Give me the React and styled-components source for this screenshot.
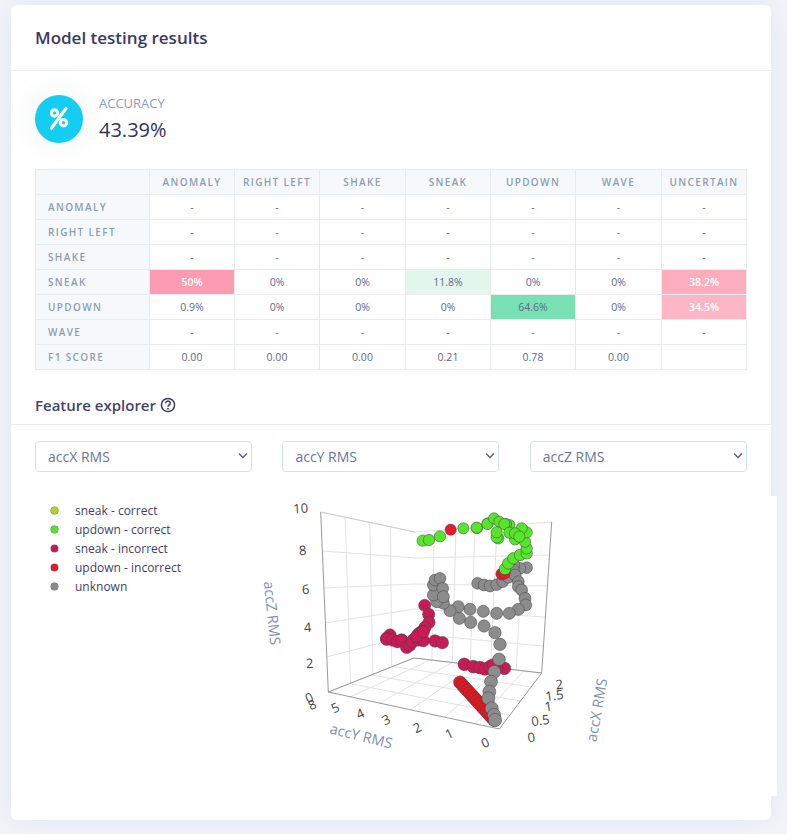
import React from 'react';
import styled, { createGlobalStyle } from 'styled-components';

const GlobalStyle = createGlobalStyle`
  body {
    margin: 0;
    background: #f3f4fa;
    font-family: "Open Sans", "Liberation Sans", sans-serif;
  }
`;

const Page = styled.div`
  width: 787px;
  height: 834px;
  padding: 5px 16px 14px 11px;
  box-sizing: border-box;
  overflow: hidden;
`;

const Card = styled.div`
  background: #fff;
  border-radius: 6px;
  height: 815px;
  box-shadow: 0 0 32px rgba(136, 152, 170, 0.15);
`;

const CardHeader = styled.div`
  height: 65px;
  padding: 0 24px;
  display: flex;
  align-items: center;
  border-bottom: 1px solid #e9ecef;
`;

const Title = styled.h3`
  margin: 0;
  font-size: 17px;
  font-weight: 600;
  color: #3a3a63;
`;

const Section = styled.div`
  padding: 24px 24px 0;
`;

const Stat = styled.div`
  display: flex;
  align-items: center;
  gap: 16px;
  height: 48px;
`;

const IconCircle = styled.div`
  width: 48px;
  height: 48px;
  border-radius: 50%;
  background: #13cdf3;
  box-shadow: 0 0 32px rgba(136, 152, 170, 0.15);
  flex: none;
`;

const StatLabel = styled.div`
  font-size: 13px;
  font-weight: 500;
  line-height: 17px;
  color: #8f9db0;
  text-transform: uppercase;
`;

const StatValue = styled.div`
  font-size: 20px;
  font-weight: 500;
  line-height: 27px;
  margin-top: 4px;
  color: #32325d;
`;

const Matrix = styled.table`
  margin-top: 26px;
  width: 711px;
  border-collapse: collapse;
  table-layout: fixed;
  font-size: 10.5px;
`;

const HeadCell = styled.th`
  height: 24px;
  padding: 0;
  border: 1px solid #e9ecef;
  background: #f6f9fc;
  color: #8f9db0;
  font-size: 10px;
  font-weight: 600;
  letter-spacing: 1.35px;
  text-transform: uppercase;
  text-align: ${(p) => (p.$row ? 'left' : 'center')};
  padding-left: ${(p) => (p.$row ? '12px' : '0')};
`;

const Cell = styled.td`
  height: 24px;
  padding: 0;
  border: 1px solid #e9ecef;
  text-align: center;
  font-weight: ${(p) => (p.$light ? 600 : p.$bg ? 500 : 400)};
  color: ${(p) => (p.$light ? '#fff' : '#5f6a88')};
  background: ${(p) => p.$bg || '#fff'};
`;

const SectionHeader = styled.div`
  margin-top: 24px;
  height: 30px;
  padding: 0 24px;
  display: flex;
  align-items: flex-start;
  gap: 4px;
  border-bottom: 1px solid #e9ecef;
`;

const SectionTitle = styled.h4`
  margin: 0;
  font-size: 15px;
  line-height: 22px;
  font-weight: 600;
  color: #45456b;
`;

const Selects = styled.div`
  display: grid;
  grid-template-columns: repeat(3, 217px);
  column-gap: 30.4px;
  padding: 16px 24px 0;
`;

const SelectBox = styled.div`
  position: relative;
  height: 31px;
`;

const Select = styled.select`
  appearance: none;
  width: 100%;
  height: 31px;
  padding: 0 12px;
  font-family: inherit;
  font-size: 14px;
  color: #6a7597;
  background: #fff;
  border: 1px solid #cfe4f1;
  border-radius: 4px;
`;

const Chevron = styled.svg`
  position: absolute;
  right: 4px;
  top: 11px;
  pointer-events: none;
`;

const Explorer = styled.div`
  display: flex;
  margin: 24px -6px 0 24px;
  height: 300px;
`;

const Legend = styled.ul`
  list-style: none;
  margin: 0;
  padding: 5px 0 0 16px;
  width: 200px;
  flex: none;
  box-sizing: content-box;
`;

const LegendItem = styled.li`
  display: flex;
  align-items: center;
  gap: 17px;
  height: 19px;
  font-size: 12px;
  color: #3f3f68;
`;

const Dot = styled.span`
  width: 7px;
  height: 7px;
  border-radius: 50%;
  background: ${(p) => p.$color};
  box-shadow: 0 0 0 0.5px #777;
`;

const Plot = styled.div`
  flex: 1;
  background: #fff;
`;

const TICK = { fontFamily: '"Open Sans", sans-serif', fontSize: 13, fill: '#444' };
const AXIS = { fontFamily: '"Open Sans", sans-serif', fontSize: 14.5, fill: '#8093ac' };

const columns = ['anomaly', 'right left', 'shake', 'sneak', 'updown', 'wave', 'uncertain'];
const dashes = ['-', '-', '-', '-', '-', '-', '-'];
const rows = [
  { name: 'anomaly', cells: dashes },
  { name: 'right left', cells: dashes },
  { name: 'shake', cells: dashes },
  {
    name: 'sneak',
    cells: [
      { v: '50%', bg: '#fb9cb2', light: true }, '0%', '0%',
      { v: '11.8%', bg: '#e4f7ef' }, '0%', '0%',
      { v: '38.2%', bg: '#fcaebf', light: true },
    ],
  },
  {
    name: 'updown',
    cells: [
      '0.9%', '0%', '0%', '0%',
      { v: '64.6%', bg: '#78e0b2' }, '0%',
      { v: '34.5%', bg: '#fcb6c6', light: true },
    ],
  },
  { name: 'wave', cells: dashes },
  { name: 'f1 score', cells: ['0.00', '0.00', '0.00', '0.21', '0.78', '0.00', ''] },
];
const colWidths = [114, 85, 85, 86, 85, 85, 86, 85];

const legend = [
  ['sneak - correct', '#b4d419'],
  ['updown - correct', '#55e62b'],
  ['sneak - incorrect', '#c91a56'],
  ['updown - incorrect', '#e8192c'],
  ['unknown', '#8c8c8c'],
];

// zoomed crop coordinates -> page coordinates
const top = (list) => list.map(([x, y]) => [260 + x / 3, 490 + y / 3]);
const low = (list) => list.map(([x, y]) => [260 + x / 3, 630 + y / 3]);
const cluster = (list) => list.map(([x, y]) => [470 + x / 3, 500 + y / 3]);

const streak = Array.from({ length: 15 }, (_, i) => [600 + i * 7.3, 157 + i * 8]);

const series = [
  {
    color: '#c91a56',
    points: [
      ...top([[494, 346], [506, 373], [507, 397], [495, 412], [485, 425], [475, 432], [390, 435], [380, 445], [425, 450], [460, 450]]),
      ...low([[380, 28], [398, 30], [412, 35], [425, 32], [440, 52], [450, 45], [457, 35], [475, 30], [490, 32], [525, 33], [547, 38], [470, 20], [490, 5],
        [613, 103], [640, 110], [660, 113], [675, 117], [733, 115], [710, 113], [690, 110], [700, 105]]),
    ],
  },
  { color: '#e6161f', points: low(streak) },
  {
    color: '#8c8c8c',
    points: [
      ...top([[653, 280], [672, 285], [690, 288], [710, 284], [728, 275], [745, 262], [800, 233], [780, 235], [762, 225],
        [760, 240], [765, 255], [775, 275], [775, 290], [785, 300], [795, 325], [797, 345], [775, 358], [748, 370],
        [710, 370], [670, 364], [630, 358], [595, 350], [570, 362], [550, 340], [530, 335], [520, 315], [520, 285],
        [525, 270], [540, 265], [548, 295], [550, 320], [598, 385], [632, 397], [672, 408], [705, 428]]),
      ...low([[720, 43], [717, 88], [703, 125], [693, 155], [688, 185], [685, 205], [695, 235], [702, 255], [705, 270]]),
    ],
  },
  { color: '#e8192c', points: top([[725, 252], [733, 250]]) },
  {
    color: '#55e62b',
    points: [
      ...top([[488, 152], [507, 150], [540, 139], [610, 115], [651, 114], [683, 100]]),
      ...cluster([[20, 83], [52, 72], [72, 55], [105, 207], [115, 190], [130, 175], [150, 165], [170, 160], [170, 145], [165, 125],
        [170, 97], [155, 85], [118, 75], [108, 72], [88, 65], [103, 72], [85, 115], [80, 112], [135, 118], [118, 98], [80, 97], [135, 100], [148, 110]]),
    ],
  },
  { color: '#e8192c', points: top([[572, 119]]) },
];

// points nearer the camera sit lower on the picture and are drawn bigger
const radius = (y) => 5.5 + ((y - 510) / 220) * 1.2;

const mix = (a, b, t) => [a[0] + (b[0] - a[0]) * t, a[1] + (b[1] - a[1]) * t];

const leftZ = [[320.7, 512], [323, 551], [323.7, 588], [325, 623], [326.7, 657], [328.3, 692]];
const backZ = [[415, 532], [415, 558], [415, 584], [414.6, 609], [414.3, 634], [414, 658]];
const rightZ = [[551.7, 522], [550, 555], [548, 586], [545, 617], [543, 646], [541.7, 673]];
const front = [499.3, 729];

const Line = ({ a, b, color = '#e3e3e3' }) => (
  <line x1={a[0]} y1={a[1]} x2={b[0]} y2={b[1]} stroke={color} strokeWidth="1" />
);

const Chart = () => {
  const lines = [];
  // z grid on both walls
  leftZ.forEach((p, i) => lines.push([p, backZ[i]], [backZ[i], rightZ[i]]));
  // upright grid lines on the walls
  [0.26, 0.52, 0.74].forEach((t) => {
    lines.push([mix(leftZ[0], backZ[0], t), mix(leftZ[5], backZ[5], t)]);
  });
  [0.14, 0.3, 0.44, 0.6, 0.8].forEach((t) => {
    lines.push([mix(backZ[0], rightZ[0], t), mix(backZ[5], rightZ[5], t)]);
  });
  // floor grid
  [0.13, 0.3, 0.48, 0.68, 0.86].forEach((t) => {
    lines.push([mix(leftZ[5], front, t), mix(backZ[5], rightZ[5], t)]);
  });
  [0.25, 0.5, 0.75].forEach((t) => {
    lines.push([mix(leftZ[5], backZ[5], t), mix(front, rightZ[5], t)]);
  });

  return (
    <svg width="526" height="300" viewBox="251 496 526 300">
      {lines.map(([a, b], i) => <Line key={i} a={a} b={b} />)}
      <Line a={leftZ[0]} b={leftZ[5]} color="#9a9a9a" />
      <Line a={rightZ[0]} b={rightZ[5]} color="#9a9a9a" />
      <Line a={backZ[0]} b={leftZ[0]} color="#cfcfcf" />
      <Line a={leftZ[5]} b={front} color="#9a9a9a" />
      <Line a={front} b={rightZ[5]} color="#9a9a9a" />
      <Line a={leftZ[5]} b={backZ[5]} color="#9a9a9a" />
      <Line a={backZ[5]} b={rightZ[5]} color="#9a9a9a" />

      {series.map((s, i) => s.points.map(([x, y], j) => (
        <circle key={`${i}-${j}`} cx={x} cy={y} r={radius(y)} fill={s.color} stroke="#444" strokeOpacity="0.65" strokeWidth="0.8" />
      )))}

      {[['10', 301, 513], ['8', 303, 555], ['6', 306, 594], ['4', 308, 632], ['2', 310, 668]].map(([t, x, y]) => (
        <text key={t} x={x} y={y} textAnchor="middle" transform={`rotate(-4 ${x} ${y})`} {...TICK}>{t}</text>
      ))}
      <text x="311" y="702" textAnchor="middle" transform="rotate(-25 311 702)" {...TICK}>0</text>
      <text x="314" y="709" textAnchor="middle" transform="rotate(-25 314 709)" {...TICK}>8</text>
      {[['5', 337, 712], ['4', 362, 718], ['3', 388, 724], ['2', 419, 732], ['1', 451, 738], ['0', 487, 747]].map(([t, x, y]) => (
        <text key={t} x={x} y={y} textAnchor="middle" transform={`rotate(-25 ${x} ${y})`} {...TICK}>{t}</text>
      ))}
      {[['0', 532, 742], ['0.5', 541, 725], ['1', 549, 711], ['1.5', 555, 700], ['2', 560, 689]].map(([t, x, y]) => (
        <text key={t} x={x} y={y} textAnchor="middle" transform={`rotate(-8 ${x} ${y})`} {...TICK}>{t}</text>
      ))}

      <text x="360" y="741" textAnchor="middle" transform="rotate(14 360 741)" {...AXIS}>accY RMS</text>
      <text x="597" y="710" textAnchor="middle" transform="rotate(-80 597 710)" dy="5" {...AXIS}>accX RMS</text>
      <text x="272" y="613" textAnchor="middle" transform="rotate(84 272 613)" dy="5" {...AXIS}>accZ RMS</text>
    </svg>
  );
};

const App = () => (
  <Page>
    <GlobalStyle />
    <Card>
      <CardHeader>
        <Title>Model testing results</Title>
      </CardHeader>
      <Section>
        <Stat>
          <IconCircle>
            <svg width="48" height="48" viewBox="0 0 48 48" fill="none" stroke="#fff">
              <circle cx="19.5" cy="18" r="3.2" strokeWidth="3" />
              <circle cx="28.5" cy="27.8" r="3.2" strokeWidth="3" />
              <path d="M31 13.5 16.5 33" strokeWidth="3.2" strokeLinecap="round" />
            </svg>
          </IconCircle>
          <div>
            <StatLabel>Accuracy</StatLabel>
            <StatValue>43.39%</StatValue>
          </div>
        </Stat>
        <Matrix>
          <colgroup>
            {colWidths.map((w, i) => <col key={i} style={{ width: w }} />)}
          </colgroup>
          <thead>
            <tr>
              <HeadCell />
              {columns.map((c) => <HeadCell key={c}>{c}</HeadCell>)}
            </tr>
          </thead>
          <tbody>
            {rows.map((row) => (
              <tr key={row.name}>
                <HeadCell $row>{row.name}</HeadCell>
                {row.cells.map((c, i) => (typeof c === 'string'
                  ? <Cell key={i}>{c}</Cell>
                  : <Cell key={i} $bg={c.bg} $light={c.light}>{c.v}</Cell>))}
              </tr>
            ))}
          </tbody>
        </Matrix>
      </Section>
      <SectionHeader>
        <SectionTitle>Feature explorer</SectionTitle>
        <svg width="16" height="22" viewBox="0 0 16 22" fill="none" stroke="#3b3b62">
          <circle cx="8" cy="11" r="6.6" strokeWidth="1.5" />
          <path d="M5.8 9.2a2.2 2.2 0 1 1 3.4 1.8c-.8.5-1.2.9-1.2 1.7" strokeWidth="1.5" />
          <circle cx="8" cy="14.7" r="0.9" fill="#3b3b62" stroke="none" />
        </svg>
      </SectionHeader>
      <Selects>
        {['accX RMS', 'accY RMS', 'accZ RMS'].map((v) => (
          <SelectBox key={v}>
            <Select defaultValue={v}>
              <option>{v}</option>
            </Select>
            <Chevron width="10" height="8" viewBox="0 0 10 8" fill="none" stroke="#5f6672" strokeWidth="1.5">
              <path d="M1 1.5 5 5.5 9 1.5" />
            </Chevron>
          </SelectBox>
        ))}
      </Selects>
      <Explorer>
        <Legend>
          {legend.map(([label, color]) => (
            <LegendItem key={label}>
              <Dot $color={color} />
              {label}
            </LegendItem>
          ))}
        </Legend>
        <Plot>
          <Chart />
        </Plot>
      </Explorer>
    </Card>
  </Page>
);

export default App;
